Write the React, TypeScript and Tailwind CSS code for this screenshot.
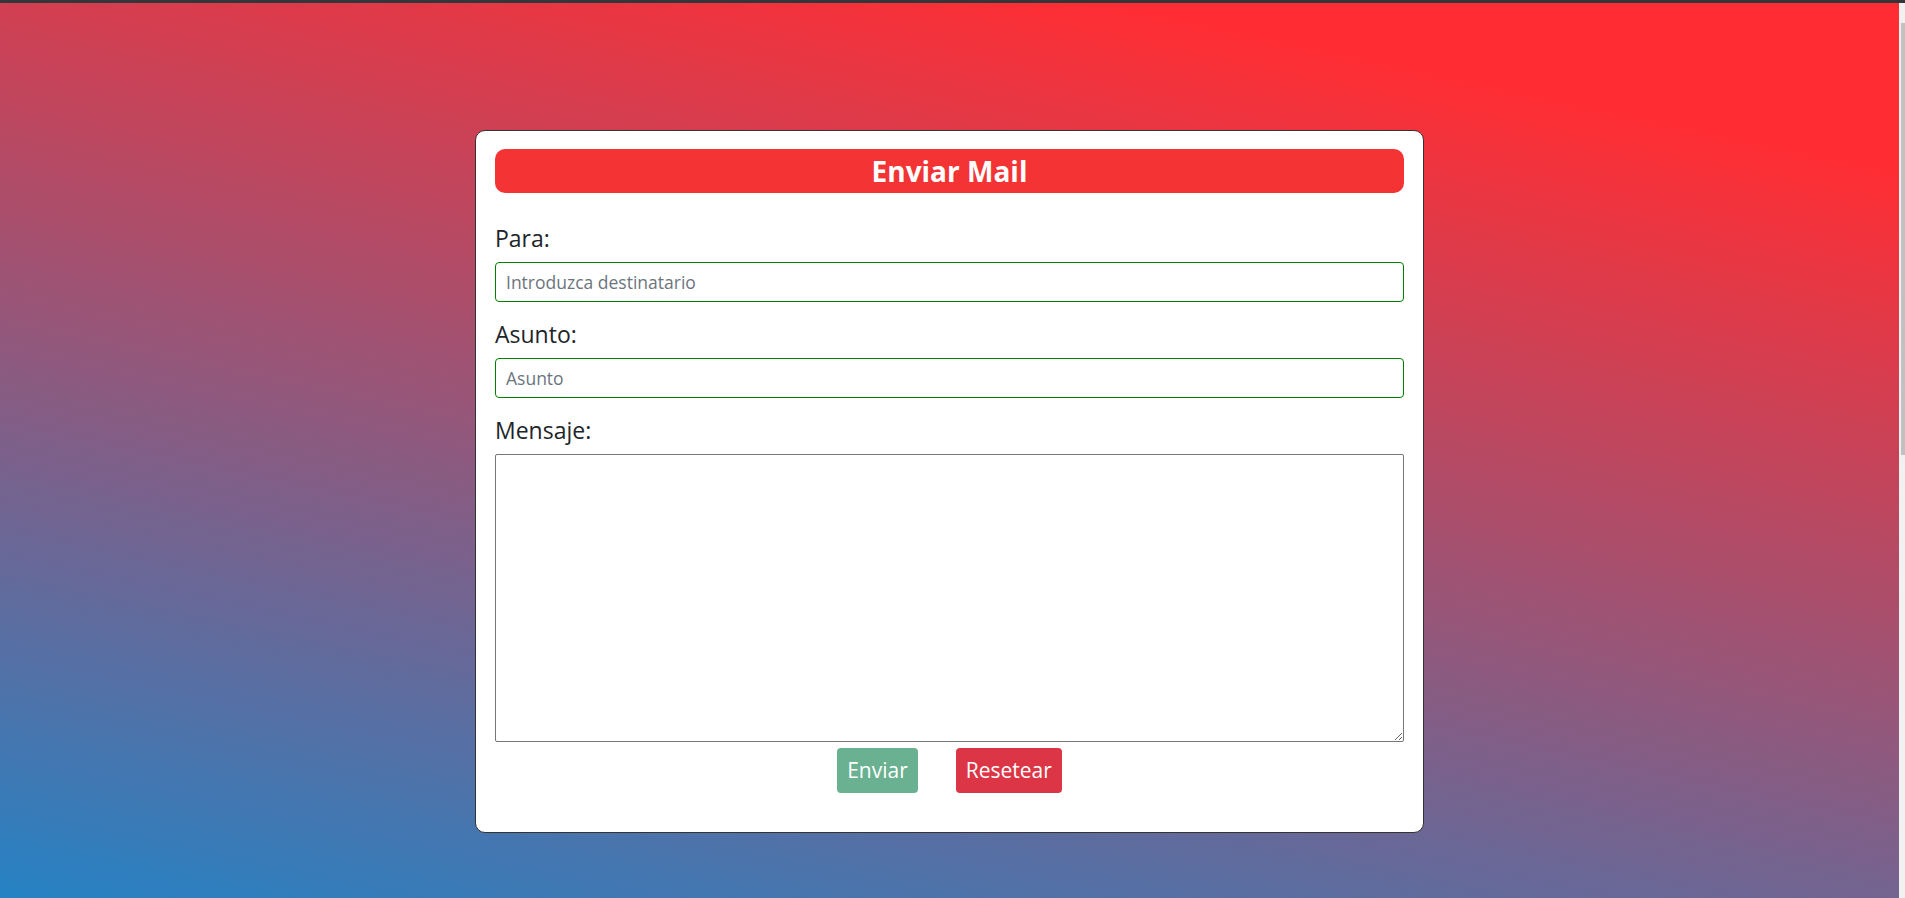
import React from 'react'

const Field = ({ label, placeholder }: { label: string; placeholder: string }) => {
    return (
        <>
            <label className="block text-[23px] leading-[30px] text-[#212529]">{label}</label>
            <input
                type="text"
                placeholder={placeholder}
                className="mt-[9px] block h-[40px] w-full rounded-[4px] border border-[#008000] bg-white pl-[10px] text-[17.5px] text-[#212529] outline-none placeholder:text-[#6c757d]"
            />
        </>
    )
}

const App = () => {
    return (
        <div className="flex min-h-screen flex-col font-['Open_Sans',sans-serif]">
            <div className="h-[3px] bg-[#35363a]" />
            <div className="flex">
                <main className="h-[895px] flex-1 bg-[linear-gradient(12deg,#2582c4_0%,#ff2d33_87%)] pt-[127px]">
                    <form className="mx-auto w-[949px] rounded-[10px] border border-[#333] bg-white px-[19px] pt-[18px] pb-[39px]">
                        <h2 className="flex h-[44px] items-center justify-center rounded-[10px] bg-[#f43335] text-[28px] font-bold text-white">
                            Enviar Mail
                        </h2>

                        <div className="mt-[30px]">
                            <Field label="Para:" placeholder="Introduzca destinatario" />
                        </div>
                        <div className="mt-[17px]">
                            <Field label="Asunto:" placeholder="Asunto" />
                        </div>

                        <div className="mt-[17px]">
                            <label className="block text-[23px] leading-[30px] text-[#212529]">Mensaje:</label>
                            <textarea className="mt-[9px] block h-[288px] w-full rounded-[2px] border border-[#767676] outline-none" />
                        </div>

                        <div className="mt-[6px] flex justify-center gap-[38px]">
                            <button type="button" className="h-[45px] rounded-[4px] bg-[#69b190] px-[10px] text-[21px] text-white">
                                Enviar
                            </button>
                            <button type="reset" className="h-[45px] rounded-[4px] bg-[#dc3545] px-[10px] text-[21px] text-white">
                                Resetear
                            </button>
                        </div>
                    </form>
                </main>
                <div className="w-[6px] bg-[#f1f1f1] pt-[20px]">
                    <div className="ml-[2px] h-[432px] bg-[#c1c1c1]" />
                </div>
            </div>
        </div>
    )
}

export default App
